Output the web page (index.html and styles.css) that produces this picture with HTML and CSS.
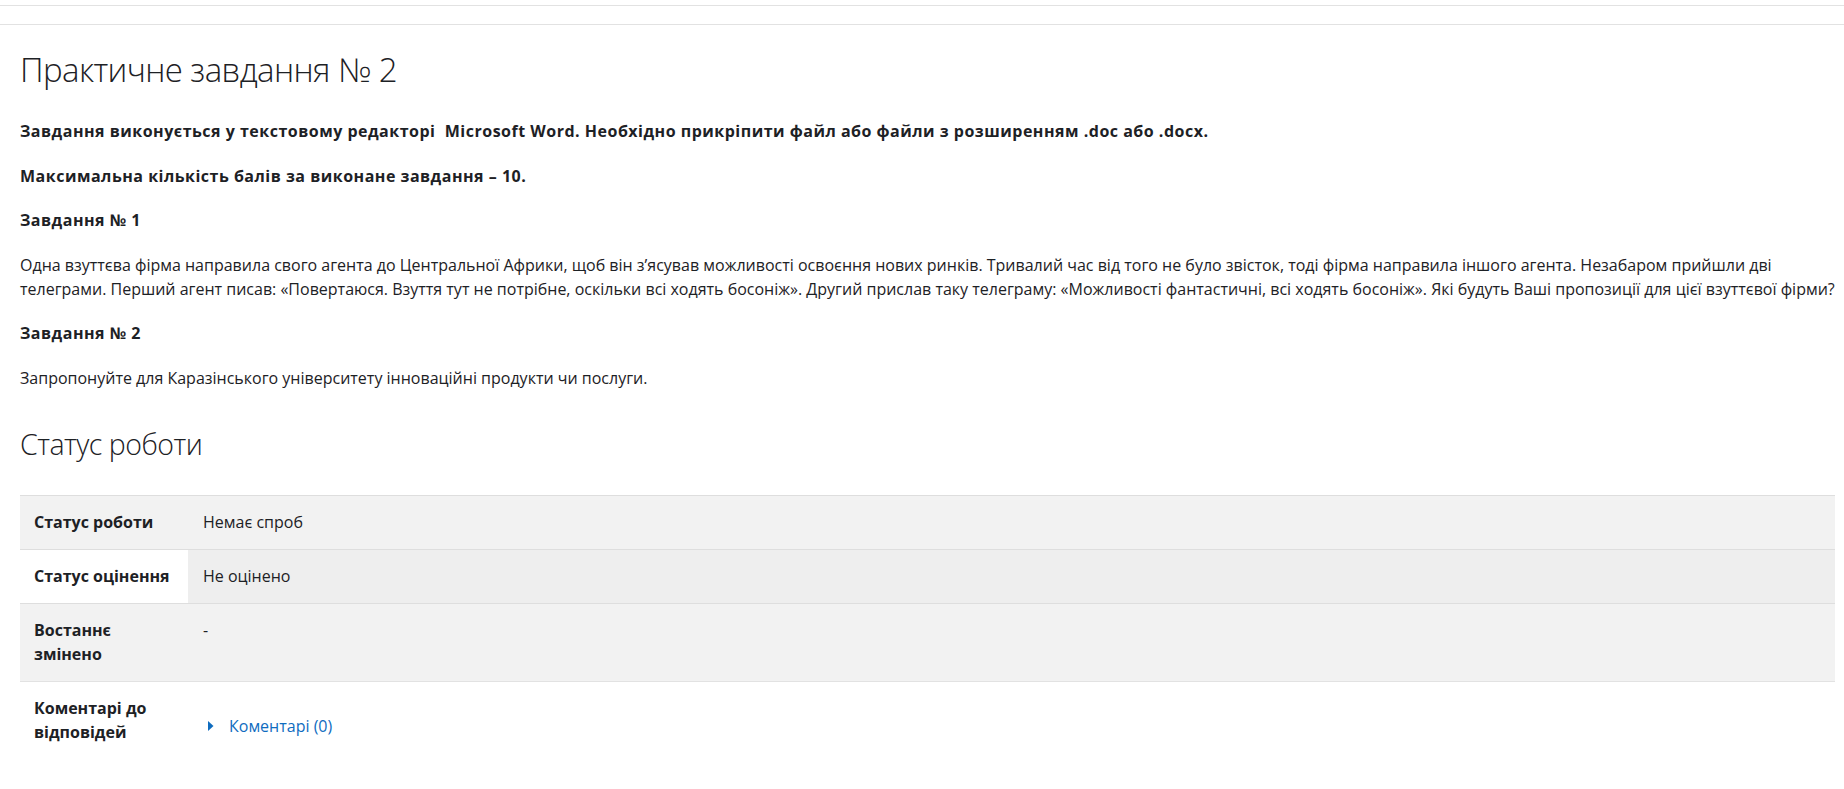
FILE: index.html
```html
<!DOCTYPE html>
<html lang="uk">
<head>
<meta charset="utf-8">
<title>Практичне завдання № 2</title>
<link rel="stylesheet" href="styles.css">
</head>
<body>
<div class="topbar"></div>
<main class="page">
  <h2 class="title">Практичне завдання № 2</h2>
  <div class="intro">
    <p><strong>Завдання виконується у текстовому редакторі&nbsp; Microsoft Word. Необхідно прикріпити файл або файли з розширенням .doc або .docx.</strong></p>
    <p><strong>Максимальна кількість балів за виконане завдання – 10.</strong></p>
    <p><strong>Завдання № 1</strong></p>
    <p>Одна взуттєва фірма направила свого агента до Центральної Африки, щоб він з’ясував можливості освоєння нових ринків. Тривалий час від того не було звісток, тоді фірма направила іншого агента. Незабаром прийшли дві телеграми. Перший агент писав: «Повертаюся. Взуття тут не потрібне, оскільки всі ходять босоніж». Другий прислав таку телеграму: «Можливості фантастичні, всі ходять босоніж». Які будуть Ваші пропозиції для цієї взуттєвої фірми?</p>
    <p><strong>Завдання № 2</strong></p>
    <p>Запропонуйте для Каразінського університету інноваційні продукти чи послуги.</p>
  </div>
  <h3 class="section-title">Статус роботи</h3>
  <table class="status">
    <tbody>
      <tr class="odd">
        <th>Статус роботи</th>
        <td>Немає спроб</td>
      </tr>
      <tr class="even">
        <th>Статус оцінення</th>
        <td>Не оцінено</td>
      </tr>
      <tr class="odd">
        <th>Востаннє змінено</th>
        <td>-</td>
      </tr>
      <tr class="plain">
        <th>Коментарі до відповідей</th>
        <td class="comments-cell">
          <a href="#" class="comments-link"><svg class="caret" width="6" height="10" viewBox="0 0 6 10"><path d="M0 0 L5.5 5 L0 10 Z" fill="#0f6cbf"/></svg><span>Коментарі (0)</span></a>
        </td>
      </tr>
    </tbody>
  </table>
</main>
</body>
</html>
```
FILE: styles.css
```css
html, body {
  margin: 0;
  padding: 0;
  background: #fff;
}
body {
  font-family: "Open Sans", "Noto Sans", sans-serif;
  color: #1d2125;
  font-size: 16px;
  line-height: 24px;
  letter-spacing: 0;
}
.topbar {
  margin-top: 5px;
  height: 18px;
  border-top: 1px solid #e2e2e2;
  border-bottom: 1px solid #e2e2e2;
}
.page {
  padding: 0 9px 0 20px;
}
.title {
  margin: 25px 0 0;
  font-size: 33px;
  line-height: 40px;
  font-weight: 300;
  letter-spacing: -0.6px;
  color: #1d2125;
}
.intro {
  margin-top: 29px;
}
.intro p {
  margin: 0 0 20.5px;
}
.intro strong {
  font-weight: 700;
  letter-spacing: 0.5px;
}
.section-title {
  margin: 37px 0 0;
  font-size: 28.5px;
  line-height: 34px;
  font-weight: 300;
  letter-spacing: -0.5px;
  color: #1d2125;
}
.status {
  margin-top: 34px;
  width: 100%;
  border-collapse: collapse;
}
.status tr {
  border-top: 1px solid #dedede;
}
.status th,
.status td {
  padding: 14px 15px 15px;
  text-align: left;
  vertical-align: top;
  line-height: 24px;
}
.status th {
  width: 168px;
  box-sizing: border-box;
  padding-left: 14px;
  font-weight: 700;
}
.status tr.odd th,
.status tr.odd td {
  background: #f2f2f2;
}
.status tr.even th {
  background: #fff;
}
.status tr.even td {
  background: #eeeeee;
}
.status tr.plain {
  border-top: 1px solid #e2e2e2;
}
.comments-link {
  display: inline-flex;
  align-items: center;
  color: #0f6cbf;
  text-decoration: none;
  margin-top: 18px;
}
.caret {
  margin-left: 5px;
  margin-right: 15px;
}
```
